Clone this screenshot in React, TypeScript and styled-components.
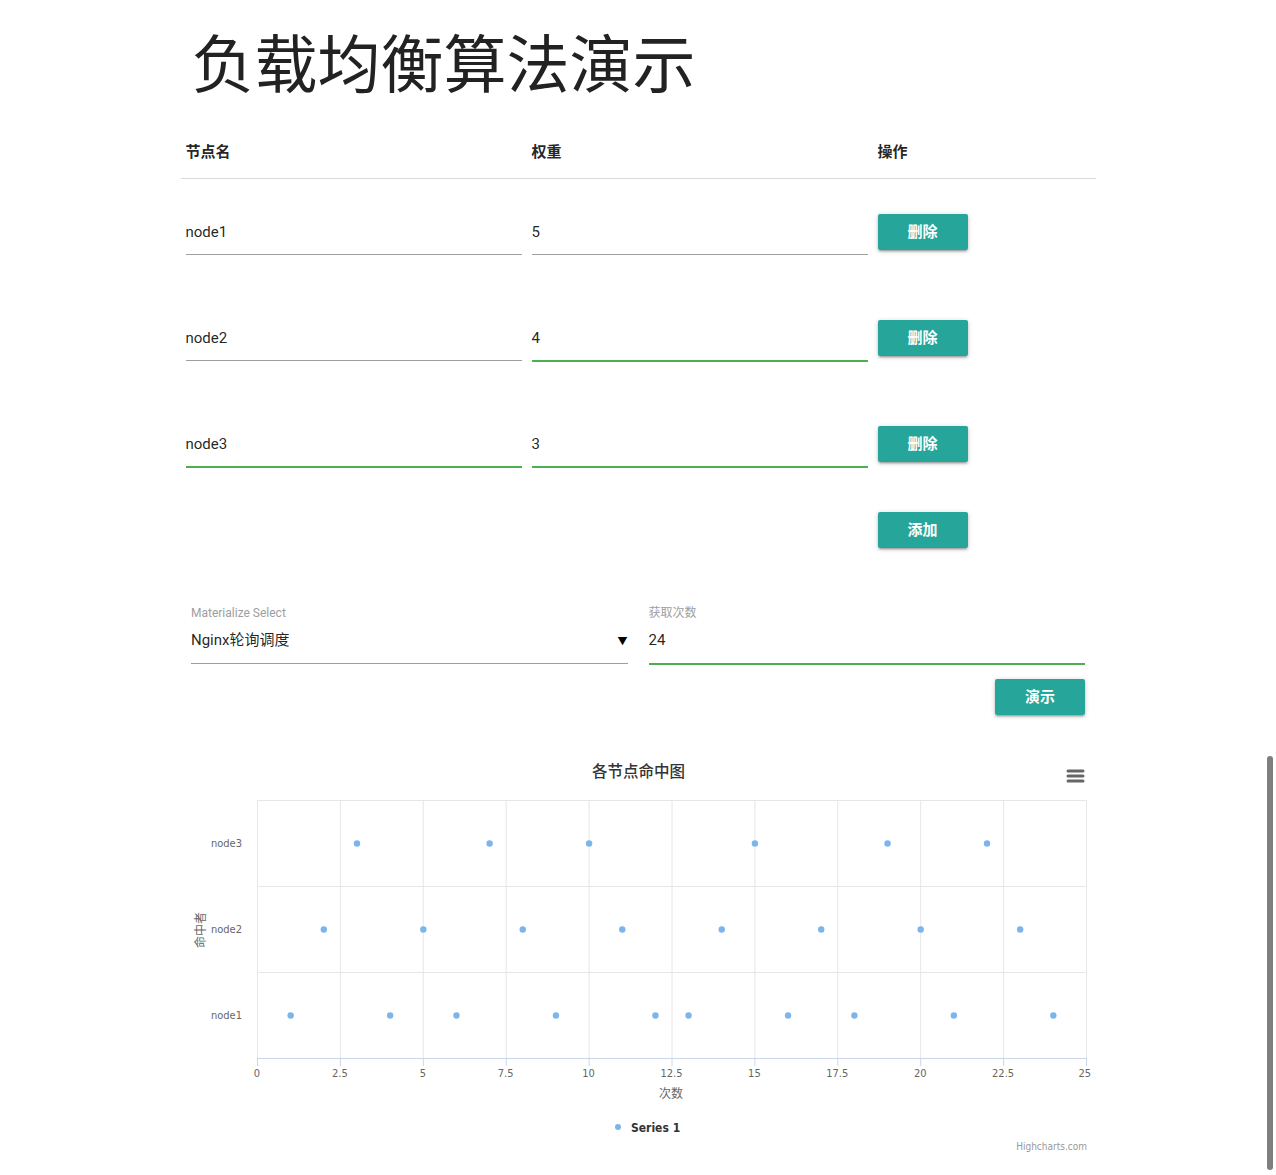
import React from 'react'
import { styled, createGlobalStyle } from 'styled-components'

const GlobalStyle = createGlobalStyle`
	html, body {
		margin: 0;
		padding: 0;
		overflow: hidden;
		background: #fff;
	}
	body {
		font-family: Roboto, 'Noto Sans CJK SC', sans-serif;
		color: rgba(0, 0, 0, 0.87);
		font-size: 15px;
	}
	* {
		box-sizing: border-box;
	}
`

type Node = { name: string; weight: string; nameValid?: boolean; weightValid?: boolean }

const nodes: Node[] = [
	{ name: 'node1', weight: '5' },
	{ name: 'node2', weight: '4', weightValid: true },
	{ name: 'node3', weight: '3', nameValid: true, weightValid: true },
]

// hit sequence shown in the chart: [x, category index] (0 = node1)
const hits: [number, number][] = [
	[1, 0], [2, 1], [3, 2], [4, 0], [5, 1], [6, 0], [7, 2], [8, 1], [9, 0], [10, 2],
	[11, 1], [12, 0], [13, 0], [14, 1], [15, 2], [16, 0], [17, 1], [18, 0], [19, 2],
	[20, 1], [21, 0], [22, 2], [23, 1], [24, 0],
]

export default function App() {
	return (
		<>
			<GlobalStyle />
			<Container>
				<Title>负载均衡算法演示</Title>
				<Table>
					<HeadCell>节点名</HeadCell>
					<HeadCell>权重</HeadCell>
					<HeadCell>操作</HeadCell>
					{nodes.map((n) => (
						<React.Fragment key={n.name}>
							<Cell>
								<TextInput $valid={n.nameValid}>{n.name}</TextInput>
							</Cell>
							<Cell>
								<TextInput $valid={n.weightValid}>{n.weight}</TextInput>
							</Cell>
							<ButtonCell>
								<Button>删除</Button>
							</ButtonCell>
						</React.Fragment>
					))}
					<AddCell />
					<AddCell />
					<AddCell>
						<Button>添加</Button>
					</AddCell>
				</Table>
				<FormRow>
					<Col>
						<FieldLabel>Materialize Select</FieldLabel>
						<FieldValue>
							Nginx轮询调度
							<Caret>▼</Caret>
						</FieldValue>
					</Col>
					<Col>
						<FieldLabel>获取次数</FieldLabel>
						<FieldValue $valid>24</FieldValue>
					</Col>
				</FormRow>
				<ActionRow>
					<Button>演示</Button>
				</ActionRow>
				<HitChart />
			</Container>
			<ScrollThumb />
		</>
	)
}

function HitChart() {
	const left = 76
	const right = 905
	const top = 55
	const bottom = 313
	const xStep = (right - left) / 25
	const band = (bottom - top) / 3
	const xPx = (v: number) => left + v * xStep
	const yPx = (cat: number) => bottom - band * cat - band / 2
	const ticks = [0, 2.5, 5, 7.5, 10, 12.5, 15, 17.5, 20, 22.5, 25]
	const cats = ['node1', 'node2', 'node3']

	return (
		<ChartBox>
			<svg width="915" height="420" viewBox="0 0 915 420">
				<text
					x="457.5"
					y="32"
					textAnchor="middle"
					fontSize="15.5"
					fontWeight="500"
					fill="#333"
					fontFamily="'Noto Sans CJK SC', sans-serif"
				>
					各节点命中图
				</text>
				<g stroke="#666" strokeWidth="3" strokeLinecap="round">
					<line x1="887" y1="26" x2="902" y2="26" />
					<line x1="887" y1="31" x2="902" y2="31" />
					<line x1="887" y1="36" x2="902" y2="36" />
				</g>
				{ticks.map((t) => (
					<line key={'v' + t} x1={xPx(t) + 0.5} y1={top} x2={xPx(t) + 0.5} y2={bottom} stroke="#e6e6e6" />
				))}
				{[0, 1, 2].map((i) => (
					<line key={'h' + i} x1={left} y1={top + band * i + 0.5} x2={right} y2={top + band * i + 0.5} stroke="#e6e6e6" />
				))}
				<line x1={left} y1={bottom + 0.5} x2={right + 1} y2={bottom + 0.5} stroke="#ccd6eb" />
				{ticks.map((t) => (
					<line key={'t' + t} x1={xPx(t) + 0.5} y1={bottom} x2={xPx(t) + 0.5} y2={bottom + 8} stroke="#ccd6eb" />
				))}
				<g fontFamily="'DejaVu Sans Condensed', 'Liberation Sans', sans-serif" fontSize="11" fill="#666">
					{ticks.map((t) => (
						<text key={'l' + t} x={xPx(t)} y={332} textAnchor={t === 25 ? 'end' : 'middle'} dx={t === 25 ? 5 : 0}>
							{t}
						</text>
					))}
					{cats.map((c, i) => (
						<text key={c} x={61} y={yPx(i) + 4} textAnchor="end">
							{c}
						</text>
					))}
				</g>
				<text x={490} y={353} textAnchor="middle" fontSize="12" fill="#666" fontFamily="'Noto Sans CJK SC', sans-serif">
					次数
				</text>
				<text
					transform="translate(24 185) rotate(-90)"
					textAnchor="middle"
					fontSize="12"
					fill="#666"
					fontFamily="'Noto Sans CJK SC', sans-serif"
				>
					命中者
				</text>
				{hits.map(([x, c]) => (
					<circle key={x} cx={xPx(x) + 0.5} cy={yPx(c) + 0.5} r="3.2" fill="#7cb5ec" />
				))}
				<circle cx="437" cy="382" r="3" fill="#7cb5ec" />
				<text
					x="450"
					y="386.5"
					fontSize="12"
					fontWeight="bold"
					fill="#333"
					fontFamily="'DejaVu Sans Condensed', 'Liberation Sans', sans-serif"
				>
					Series 1
				</text>
				<text
					x="906"
					y="405"
					textAnchor="end"
					fontSize="10"
					fill="#999"
					fontFamily="'DejaVu Sans Condensed', 'Liberation Sans', sans-serif"
				>
					Highcharts.com
				</text>
			</svg>
		</ChartBox>
	)
}

const Container = styled.div`
	width: 915px;
	margin: 0 auto;
`

const Title = styled.h1`
	margin: 0;
	padding: 23px 0 0 11px;
	font-family: 'Noto Sans CJK SC', sans-serif;
	font-weight: 400;
	font-size: 63px;
	line-height: 74px;
	color: #222;
`

const Table = styled.div`
	display: grid;
	grid-template-columns: 346px 346px 223px;
	margin-top: 29px;
`

const HeadCell = styled.div`
	padding: 15px 5px;
	line-height: 22px;
	font-size: 15px;
	font-weight: 700;
	border-bottom: 1px solid rgba(0, 0, 0, 0.15);
`

const Cell = styled.div`
	height: 106px;
	padding: 31px 5px 0;
`

const ButtonCell = styled.div`
	height: 106px;
	padding: 35px 5px 0;
`

const AddCell = styled.div`
	height: 66px;
	padding: 15px 5px 0;
`

const TextInput = styled.div<{ $valid?: boolean }>`
	height: 45px;
	line-height: 44px;
	font-size: 15px;
	border-bottom: 1px solid ${(p) => (p.$valid ? '#4caf50' : '#9e9e9e')};
	box-shadow: ${(p) => (p.$valid ? '0 1px 0 0 #4caf50' : 'none')};
`

const Button = styled.button`
	height: 36px;
	padding: 0 30px;
	border: none;
	border-radius: 2px;
	background: #26a69a;
	color: #fff;
	font-family: Roboto, 'Noto Sans CJK SC', sans-serif;
	font-size: 15px;
	font-weight: 700;
	line-height: 36px;
	box-shadow:
		0 2px 2px 0 rgba(0, 0, 0, 0.14),
		0 3px 1px -2px rgba(0, 0, 0, 0.12),
		0 1px 5px 0 rgba(0, 0, 0, 0.2);
`

const FormRow = styled.div`
	display: grid;
	grid-template-columns: 1fr 1fr;
	margin-top: 41px;
`

const Col = styled.div`
	padding: 0 10.5px;
`

const FieldLabel = styled.div`
	font-size: 12px;
	line-height: 18px;
	color: #9e9e9e;
`

const FieldValue = styled.div<{ $valid?: boolean }>`
	position: relative;
	height: 42px;
	line-height: 36px;
	font-size: 15px;
	border-bottom: 1px solid ${(p) => (p.$valid ? '#4caf50' : '#9e9e9e')};
	box-shadow: ${(p) => (p.$valid ? '0 1px 0 0 #4caf50' : 'none')};
`

const Caret = styled.span`
	position: absolute;
	right: 0;
	top: 2px;
	font-size: 10px;
	color: #000;
`

const ActionRow = styled.div`
	display: flex;
	justify-content: flex-end;
	padding: 15px 10.5px 0;
`

const ChartBox = styled.div`
	margin-top: 30px;
	height: 420px;
	svg {
		display: block;
	}
`

const ScrollThumb = styled.div`
	position: fixed;
	left: 1267px;
	top: 756px;
	width: 6px;
	height: 414px;
	border-radius: 3px;
	background: #7f7f7f;
`
